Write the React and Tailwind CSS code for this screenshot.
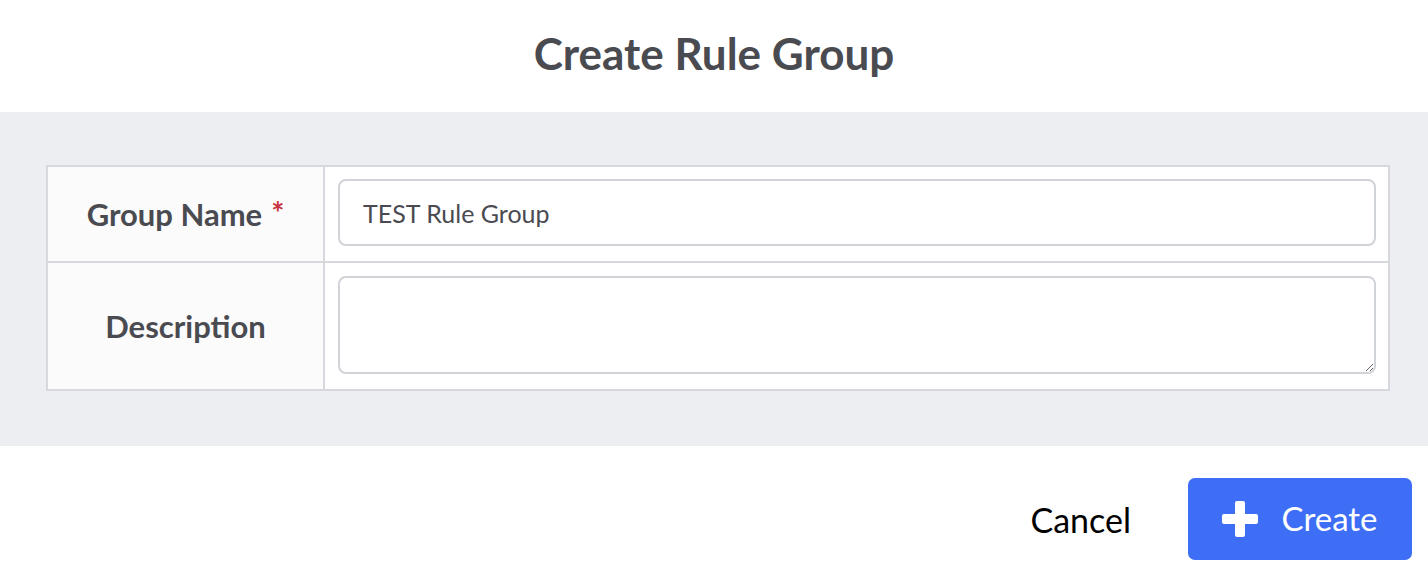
import React, { useState } from 'react';

const PlusIcon = () => (
      <svg width="36" height="36" viewBox="0 0 36 36" className="shrink-0">
            <rect x="13" y="0" width="10" height="36" rx="2" fill="white" />
            <rect x="0" y="13" width="36" height="10" rx="2" fill="white" />
      </svg>
);

const App = () => {
      const [groupName, setGroupName] = useState("TEST Rule Group");
      const [description, setDescription] = useState("");

      return (
            <div className="w-[1428px] h-[586px] bg-white font-['Lato',sans-serif] text-[#4a4b51] overflow-hidden">
                  {/* header */}
                  <div className="h-[112px] flex items-center justify-center pb-[6px]">
                        <h1 className="text-[44px] font-bold">Create Rule Group</h1>
                  </div>

                  {/* form body */}
                  <div className="h-[334px] bg-[#edeef2] pt-[53px] pl-[46px] pr-[38px]">
                        <div className="border-2 border-[#d6d8de] bg-white">
                              <div className="flex h-[96px] border-b-2 border-[#d6d8de]">
                                    <div className="w-[277px] shrink-0 bg-[#fbfbfb] border-r-2 border-[#d6d8de] flex items-center justify-center">
                                          <span className="text-[31px] font-bold">Group Name</span>
                                          <span className="text-[31px] font-bold text-[#c8323f] ml-[9px] -mt-[4px]">*</span>
                                    </div>
                                    <div className="flex-1 pl-[13px] pr-[12px] pt-[12px]">
                                          <input
                                                value={groupName}
                                                onChange={(e) => setGroupName(e.target.value)}
                                                className="w-full h-[67px] border-2 border-[#d0d3d8] rounded-[8px] px-[23px] text-[25px] text-[#4a4b51] outline-none"
                                          />
                                    </div>
                              </div>
                              <div className="flex h-[126px]">
                                    <div className="w-[277px] shrink-0 bg-[#fbfbfb] border-r-2 border-[#d6d8de] flex items-center justify-center">
                                          <span className="text-[31px] font-bold">Description</span>
                                    </div>
                                    <div className="flex-1 pl-[13px] pr-[12px] pt-[13px]">
                                          <textarea
                                                value={description}
                                                onChange={(e) => setDescription(e.target.value)}
                                                className="block w-full h-[98px] border-2 border-[#d0d3d8] rounded-[8px] px-[23px] py-[14px] text-[25px] outline-none"
                                          />
                                    </div>
                              </div>
                        </div>
                  </div>

                  {/* footer */}
                  <div className="flex items-center justify-end pt-[32px] pr-[16px]">
                        <button className="text-[34px] text-black mr-[57px]">Cancel</button>
                        <button className="w-[224px] h-[82px] bg-[#3d6ef5] rounded-[7px] flex items-center justify-center gap-[23px] text-white text-[33px]">
                              <PlusIcon />
                              <span>Create</span>
                        </button>
                  </div>
            </div>
      );
};

export default App;
